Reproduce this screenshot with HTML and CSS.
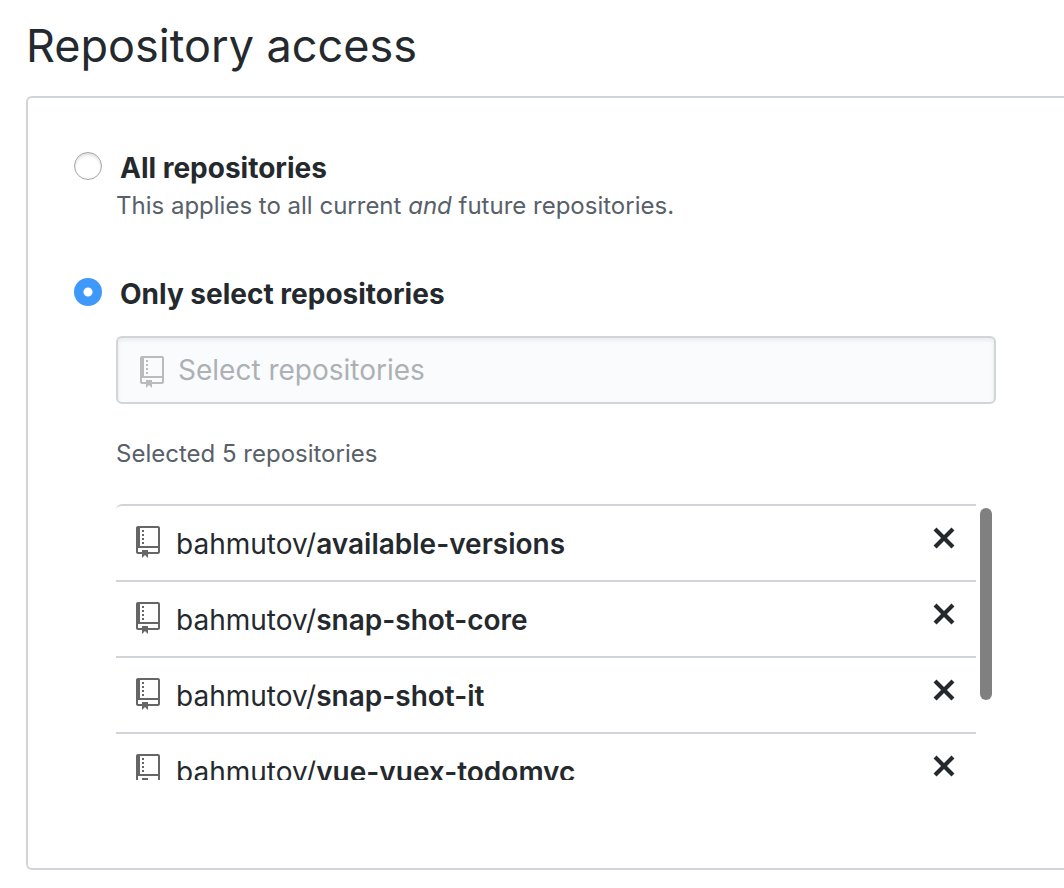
FILE: index.html
```html
<!DOCTYPE html>
<html lang="en">
<head>
<meta charset="utf-8">
<title>Repository access</title>
<link rel="stylesheet" href="styles.css">
</head>
<body>
<svg class="sprite" aria-hidden="true">
  <symbol id="repo" viewBox="0 0 12 16"><path d="M4 9H3V8h1v1zm0-3H3v1h1V6zm0-2H3v1h1V4zm0-2H3v1h1V2zm8-1v12c0 .55-.45 1-1 1H6v2l-1.5-1.5L3 16v-2H1c-.55 0-1-.45-1-1V1c0-.55.45-1 1-1h10c.55 0 1 .45 1 1zm-1 10H1v2h2v-1h3v1h5v-2zm0-10H2v9h9V1z"/></symbol>
  <symbol id="x" viewBox="0 0 12 16"><path d="M7.48 8l3.75 3.75-1.48 1.48L6 9.48l-3.75 3.75-1.48-1.48L4.52 8 .77 4.25l1.48-1.48L6 6.52l3.75-3.75 1.48 1.48L7.48 8z"/></symbol>
</svg>
<main class="page">
  <h1 class="title">Repository access</h1>
  <form class="panel">
    <div class="option">
      <input class="radio" type="radio" name="access" id="all">
      <div class="option-body">
        <label class="option-label" for="all">All repositories</label>
        <p class="note">This applies to all current <em>and</em> future repositories.</p>
      </div>
    </div>
    <div class="option">
      <input class="radio" type="radio" name="access" id="select" checked>
      <div class="option-body">
        <label class="option-label" for="select">Only select repositories</label>
        <div class="search">
          <svg class="icon"><use href="#repo"/></svg>
          <input class="search-input" type="text" placeholder="Select repositories" aria-label="Select repositories">
        </div>
        <p class="count">Selected 5 repositories</p>
        <div class="scroller">
          <ul class="repos">
            <li class="repo"><svg class="icon"><use href="#repo"/></svg><span class="name">bahmutov/<strong>available-versions</strong></span><button class="remove" type="button" aria-label="Remove available-versions"><svg class="icon"><use href="#x"/></svg></button></li>
            <li class="repo"><svg class="icon"><use href="#repo"/></svg><span class="name">bahmutov/<strong>snap-shot-core</strong></span><button class="remove" type="button" aria-label="Remove snap-shot-core"><svg class="icon"><use href="#x"/></svg></button></li>
            <li class="repo"><svg class="icon"><use href="#repo"/></svg><span class="name">bahmutov/<strong>snap-shot-it</strong></span><button class="remove" type="button" aria-label="Remove snap-shot-it"><svg class="icon"><use href="#x"/></svg></button></li>
            <li class="repo"><svg class="icon"><use href="#repo"/></svg><span class="name">bahmutov/<strong>vue-vuex-todomvc</strong></span><button class="remove" type="button" aria-label="Remove vue-vuex-todomvc"><svg class="icon"><use href="#x"/></svg></button></li>
            <li class="repo"></li>
          </ul>
          <div class="track"><div class="thumb"></div></div>
        </div>
      </div>
    </div>
  </form>
</main>
</body>
</html>
```
FILE: styles.css
```css
* { box-sizing: border-box; }
body {
  margin: 0;
  background: #fff;
  color: #24292e;
  font: 28px/42px Inter, "Liberation Sans", sans-serif;
}
.sprite { display: none; }
.page { padding: 10px 0 18px 26px; }
.title {
  margin: 0 0 14px;
  font-size: 45px;
  line-height: 72px;
  font-weight: 400;
}
.panel {
  border: 2px solid #d1d5da;
  border-right: 0;
  border-radius: 6px 0 0 6px;
  padding: 48px 68px 88px 46px;
}
.option { display: flex; gap: 14px; }
.option + .option { margin-top: 50px; }
.radio {
  appearance: none;
  flex: none;
  width: 28px;
  height: 28px;
  margin: 6px 0 0;
  border: 1px solid #a6a6a6;
  border-radius: 50%;
  background: #fff;
  box-shadow: inset 0 2px 3px #ddd;
}
.radio:checked {
  border: 0;
  background: radial-gradient(circle, #fff 4px, #3f99fb 5px);
  box-shadow: none;
}
.option-body { flex: 1; min-width: 0; }
.option-label {
  display: block;
  padding-left: 4px;
  font-weight: 650;
  line-height: 44px;
}
.note, .count {
  margin: 0;
  color: #586069;
  font-size: 24px;
  line-height: 32px;
}
.search {
  display: flex;
  align-items: center;
  gap: 14px;
  height: 68px;
  margin-top: 20px;
  padding: 0 22px;
  border: 2px solid #d1d5da;
  border-radius: 6px;
  background: #fafbfc;
  box-shadow: inset 0 2px 4px rgba(27, 31, 35, .08);
}
.icon { display: block; flex: none; width: 24px; height: 32px; fill: #666; }
.search .icon { margin-top: 4px; fill: #bbb; }
.search-input {
  flex: 1;
  min-width: 0;
  padding: 0;
  border: 0;
  outline: 0;
  background: none;
  color: inherit;
  font: inherit;
}
.search-input::placeholder { color: #acb1b5; opacity: 1; }
.count { margin: 34px 0; }
.scroller { display: flex; height: 276px; }
.repos {
  flex: 1;
  margin: 0;
  padding: 0;
  overflow-y: auto;
  scrollbar-width: none;
  list-style: none;
}
.track { width: 20px; padding: 4px; }
.thumb { height: 192px; border-radius: 6px; background: #808080; }
.repo {
  display: flex;
  align-items: flex-start;
  height: 76px;
  padding: 20px;
  border-top: 2px solid #d1d5da;
}
.repo:first-child { border-top-left-radius: 6px; }
.name { flex: 1; margin-left: 16px; line-height: 36px; }
.name strong { font-weight: 600; }
.remove { margin-top: -4px; padding: 0; border: 0; background: none; }
.remove .icon { fill: #24292e; }
```
